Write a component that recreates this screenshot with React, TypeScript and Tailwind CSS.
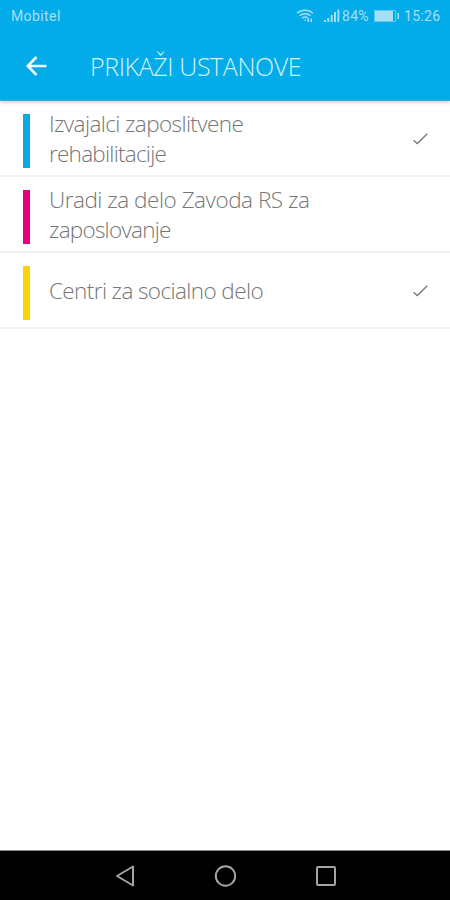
import React from "react";

type Row = { lines: { text: string; track: string }[]; bar: string; checked: boolean };

const rows: Row[] = [
  {
    lines: [
      { text: "Izvajalci zaposlitvene", track: "tracking-[-0.6px]" },
      { text: "rehabilitacije", track: "tracking-[-0.75px]" },
    ],
    bar: "bg-[#0ba8e4]",
    checked: true,
  },
  {
    lines: [
      { text: "Uradi za delo Zavoda RS za", track: "tracking-[-0.47px]" },
      { text: "zaposlovanje", track: "tracking-[-0.75px]" },
    ],
    bar: "bg-[#e6007e]",
    checked: false,
  },
  {
    lines: [{ text: "Centri za socialno delo", track: "tracking-[-0.6px]" }],
    bar: "bg-[#fbd405]",
    checked: true,
  },
];

function StatusBar() {
  return (
    <div className="flex h-8 items-center justify-between pl-[11px] pr-[9px] font-[Roboto,sans-serif] text-[14px] text-[#a3e0f7]">
      <span className="tracking-[0.4px]">Mobitel</span>
      <div className="flex items-center">
        <svg className="mr-[10px] h-4 w-[18px]" viewBox="0 0 18 16" fill="none" stroke="currentColor" strokeWidth="1.4">
          <path d="M1 5.2C5.5 1.2 12.5 1.2 17 5.2M3.5 7.800C6.700 5 11.300 5 14.500 7.800M6 10.300c1.800-1.500 4.200-1.500 6 0" />
          <path d="M7.500 11.500 9 13l1.200-1.300z" fill="currentColor" stroke="none" />
          <path d="M12.300 10.500v3.500M15.300 10.500v3.500" strokeWidth="1.600" />
        </svg>
        <svg className="mr-[2px] h-4 w-4" viewBox="0 0 16 16" fill="currentColor">
          <path d="M0 12h2v2H0zM3.300 10h2v4h-2zM6.700 7h2v7h-2zM10 4h2v10h-2zM13.500 1.500h1.800V14h-1.800z" />
        </svg>
        <span className="w-[28px] whitespace-nowrap tracking-[0.3px]">84%</span>
        <svg className="ml-[4px] mr-[4px] h-3 w-[26px]" viewBox="0 0 26 12">
          <path d="M.5.5h21v11H.5z" fill="none" stroke="currentColor" strokeOpacity=".6" />
          <path d="M1 1h18v10H1z" fill="currentColor" />
          <path d="M23.500 3h1.500v6h-1.500z" fill="currentColor" />
        </svg>
        <span className="w-[37px] whitespace-nowrap tracking-[0.3px]">15:26</span>
      </div>
    </div>
  );
}

function Check() {
  return (
    <svg className="h-3 w-4" viewBox="0 0 16 12" fill="none" stroke="#777777" strokeWidth="1.300">
      <path d="M.5 7.300 4.200 10.500 14.300.8" />
    </svg>
  );
}

export default function App() {
  return (
    <div className="flex h-[900px] w-[450px] flex-col overflow-hidden bg-white font-['Open_Sans','Noto_Sans',sans-serif]">
      <header className="h-[101px] shrink-0 border-b border-[#3cabd4] bg-[#03abe8] shadow-[0_1px_4px_rgba(0,0,0,0.25)]">
        <StatusBar />
        <div className="flex h-[68px] items-center pl-[26px]">
          <svg className="h-5 w-[21px]" viewBox="0 0 21 20" fill="none" stroke="#f4fcff" strokeWidth="2.600">
            <path d="M20.500 10H2M10.500 1 1.700 10l8.800 9" />
          </svg>
          <h1 className="ml-[43px] whitespace-nowrap text-[25px] font-light leading-8 tracking-[-0.4px] text-[#d3f2fc]">
            PRIKAŽI USTANOVE
          </h1>
        </div>
      </header>
      <main className="flex-1">
        {rows.map((row) => (
          <div key={row.bar} className="flex h-[76px] items-center border-b-2 border-[#f1f1f1] pl-[23px] pr-[21px] pt-[2px]">
            <div className={`mt-1 h-[54px] w-[7px] ${row.bar}`} />
            <div className="ml-[19px] flex-1 text-[22.500px] font-light leading-[30px] text-[#767676]">
              {row.lines.map((l) => (
                <div key={l.text} className={`whitespace-nowrap ${l.track}`}>
                  {l.text}
                </div>
              ))}
            </div>
            {row.checked && <Check />}
          </div>
        ))}
      </main>
      <nav className="flex h-[50px] shrink-0 items-center justify-center gap-[80px] border-t border-[#888888] bg-black pr-px">
        <svg className="h-[22px] w-5" viewBox="0 0 20 22" fill="none" stroke="#a5a5a5" strokeWidth="2" strokeLinejoin="round">
          <path d="M19 1.500v19L3 11z" />
        </svg>
        <svg className="h-[22px] w-[22px]" viewBox="0 0 22 22" fill="none" stroke="#a5a5a5" strokeWidth="2">
          <circle cx="11.500" cy="11" r="9.700" />
        </svg>
        <svg className="h-5 w-5" viewBox="0 0 20 20" fill="none" stroke="#a5a5a5" strokeWidth="2">
          <rect x="1" y="1" width="18" height="18" rx="1" />
        </svg>
      </nav>
    </div>
  );
}
